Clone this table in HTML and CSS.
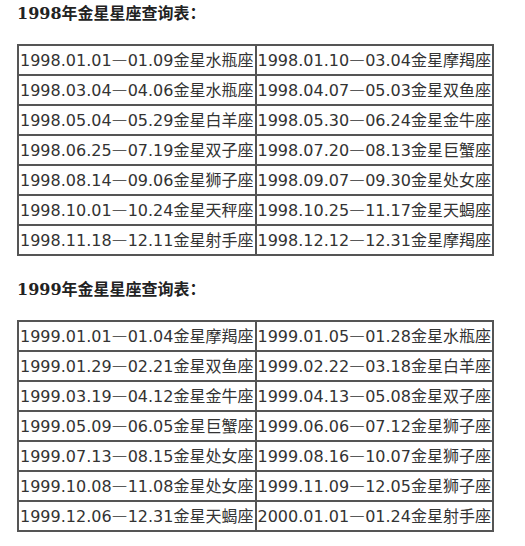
FILE: index.html
```html
<!DOCTYPE html>
<html lang="zh-CN">
<head>
<meta charset="utf-8">
<title>金星星座查询表</title>
<link rel="stylesheet" href="styles.css">
</head>
<body>
<div class="page">
  <h2 class="title">1998年金星星座查询表<span class="colon">：</span></h2>
  <table class="venus">
    <tr><td>1998.01.01<span class="d">—</span>01.09金星水瓶座</td><td>1998.01.10<span class="d">—</span>03.04金星摩羯座</td></tr>
    <tr><td>1998.03.04<span class="d">—</span>04.06金星水瓶座</td><td>1998.04.07<span class="d">—</span>05.03金星双鱼座</td></tr>
    <tr><td>1998.05.04<span class="d">—</span>05.29金星白羊座</td><td>1998.05.30<span class="d">—</span>06.24金星金牛座</td></tr>
    <tr><td>1998.06.25<span class="d">—</span>07.19金星双子座</td><td>1998.07.20<span class="d">—</span>08.13金星巨蟹座</td></tr>
    <tr><td>1998.08.14<span class="d">—</span>09.06金星狮子座</td><td>1998.09.07<span class="d">—</span>09.30金星处女座</td></tr>
    <tr><td>1998.10.01<span class="d">—</span>10.24金星天秤座</td><td>1998.10.25<span class="d">—</span>11.17金星天蝎座</td></tr>
    <tr><td>1998.11.18<span class="d">—</span>12.11金星射手座</td><td>1998.12.12<span class="d">—</span>12.31金星摩羯座</td></tr>
  </table>
  <h2 class="title">1999年金星星座查询表<span class="colon">：</span></h2>
  <table class="venus">
    <tr><td>1999.01.01<span class="d">—</span>01.04金星摩羯座</td><td>1999.01.05<span class="d">—</span>01.28金星水瓶座</td></tr>
    <tr><td>1999.01.29<span class="d">—</span>02.21金星双鱼座</td><td>1999.02.22<span class="d">—</span>03.18金星白羊座</td></tr>
    <tr><td>1999.03.19<span class="d">—</span>04.12金星金牛座</td><td>1999.04.13<span class="d">—</span>05.08金星双子座</td></tr>
    <tr><td>1999.05.09<span class="d">—</span>06.05金星巨蟹座</td><td>1999.06.06<span class="d">—</span>07.12金星狮子座</td></tr>
    <tr><td>1999.07.13<span class="d">—</span>08.15金星处女座</td><td>1999.08.16<span class="d">—</span>10.07金星狮子座</td></tr>
    <tr><td>1999.10.08<span class="d">—</span>11.08金星处女座</td><td>1999.11.09<span class="d">—</span>12.05金星狮子座</td></tr>
    <tr><td>1999.12.06<span class="d">—</span>12.31金星天蝎座</td><td>2000.01.01<span class="d">—</span>01.24金星射手座</td></tr>
  </table>
</div>
</body>
</html>
```
FILE: styles.css
```css
html, body {
  margin: 0;
  padding: 0;
  background: #fff;
}
.page {
  padding: 0 0 0 17px;
  color: #333;
}
.title {
  margin: 0 0 20px;
  height: 24px;
  font-family: "DejaVu Serif", "Noto Sans CJK SC", serif;
  font-weight: bold;
  font-size: 16px;
  line-height: 24px;
  color: #222;
}
.colon {
  font-family: "Noto Sans CJK TC", sans-serif;
}
.venus + .title {
  margin-top: 20px;
}
.venus {
  border: 1px solid #555;
  border-collapse: separate;
  border-spacing: 0;
  table-layout: fixed;
  width: 477px;
  font-family: "DejaVu Sans", "Noto Sans CJK SC", sans-serif;
  font-size: 16px;
  color: #333;
}
.venus td {
  border: 1px solid #555;
  padding: 0 0 0 1px;
  height: 28px;
  line-height: 18px;
  vertical-align: middle;
  white-space: nowrap;
  overflow: hidden;
}
.d {
  font-family: "Noto Sans CJK SC", sans-serif;
}
```
